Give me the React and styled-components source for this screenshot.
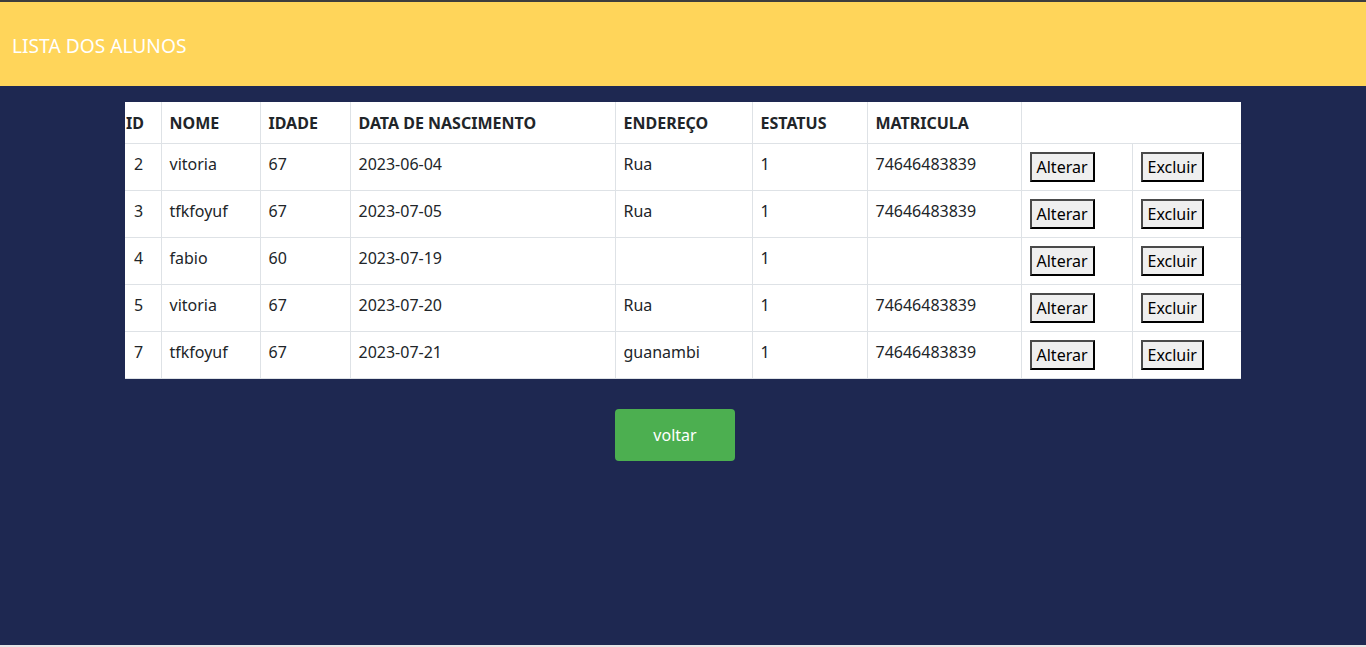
import React from "react";
import styled, { createGlobalStyle } from "styled-components";

const Global = createGlobalStyle`
  html, body { margin: 0; padding: 0; }
  body {
    font-family: "Segoe UI", "Noto Sans", sans-serif;
    background: #e6e6e6;
  }
`;

const Page = styled.div`
  display: flex;
  flex-direction: column;
  height: 645px;
  border-top: 2px solid #3d3d3d;
  box-sizing: border-box;
  background: #1e2851;
`;

const Header = styled.header`
  height: 84px;
  background: #ffd55a;
  display: flex;
  align-items: center;
  padding-left: 12px;
  flex-shrink: 0;
`;

const Title = styled.h1`
  margin: 0;
  color: #ffffff;
  font-size: 19.2px;
  font-weight: 400;
  padding-top: 2px;
`;

const Main = styled.main`
  flex: 1;
  display: flex;
  flex-direction: column;
  align-items: center;
  padding-top: 16px;
`;

const Table = styled.table`
  width: 1116px;
  border-collapse: collapse;
  background: #ffffff;
  color: #212529;
  font-size: 16px;
  table-layout: fixed;
`;

const Th = styled.th`
  text-align: left;
  font-weight: 700;
  padding: ${(p) => (p.$tight ? "9px 0 8px 1px" : "9px 8px 8px 8px")};
  line-height: 24px;
  border: 1px solid #dee2e6;
  border-top: none;
  vertical-align: top;
  white-space: nowrap;
  &:first-child { border-left: none; }
  &:last-child { border-right: none; }
`;

const Td = styled.td`
  padding: 8px;
  line-height: 24px;
  border: 1px solid #dee2e6;
  vertical-align: top;
  white-space: nowrap;
  &:first-child { border-left: none; padding-left: 9px; }
  &:last-child { border-right: none; }
`;

const Row = styled.tr`
  &:last-child td { border-bottom: 1px solid #dee2e6; }
`;

const ActionButton = styled.button`
  display: block;
  font-family: inherit;
  font-size: 16px;
  line-height: 22px;
  height: 30px;
  padding: 0 5px;
  background: #efefef;
  color: #000;
  border: 2px solid;
  border-color: #4a4a4a #000 #000 #4a4a4a;
  cursor: pointer;
`;

const ButtonRow = styled.div`
  display: flex;
  justify-content: center;
  margin-top: 30px;
  width: 100%;
`;

const BackButton = styled.button`
  width: 120px;
  height: 52px;
  margin-right: 16px;
  border: none;
  border-radius: 4px;
  background: #4caf50;
  color: #ffffff;
  font-family: inherit;
  font-size: 16px;
  cursor: pointer;
`;

const widths = [36, 99, 90, 265, 137, 115, 154, 111, 109];

const alunos = [
  { id: 2, nome: "vitoria", idade: 67, data: "2023-06-04", end: "Rua", status: 1, mat: "74646483839" },
  { id: 3, nome: "tfkfoyuf", idade: 67, data: "2023-07-05", end: "Rua", status: 1, mat: "74646483839" },
  { id: 4, nome: "fabio", idade: 60, data: "2023-07-19", end: "", status: 1, mat: "" },
  { id: 5, nome: "vitoria", idade: 67, data: "2023-07-20", end: "Rua", status: 1, mat: "74646483839" },
  { id: 7, nome: "tfkfoyuf", idade: 67, data: "2023-07-21", end: "guanambi", status: 1, mat: "74646483839" },
];

export default function App() {
  return (
    <>
      <Global />
      <Page>
        <Header>
          <Title>LISTA DOS ALUNOS</Title>
        </Header>
        <Main>
          <Table>
            <colgroup>
              {widths.map((w, i) => (
                <col key={i} style={{ width: w }} />
              ))}
            </colgroup>
            <thead>
              <tr>
                <Th $tight>ID</Th>
                <Th>NOME</Th>
                <Th>IDADE</Th>
                <Th>DATA DE NASCIMENTO</Th>
                <Th>ENDEREÇO</Th>
                <Th>ESTATUS</Th>
                <Th>MATRICULA</Th>
                <Th colSpan={2}></Th>
              </tr>
            </thead>
            <tbody>
              {alunos.map((a) => (
                <Row key={a.id}>
                  <Td>{a.id}</Td>
                  <Td>{a.nome}</Td>
                  <Td>{a.idade}</Td>
                  <Td>{a.data}</Td>
                  <Td>{a.end}</Td>
                  <Td>{a.status}</Td>
                  <Td>{a.mat}</Td>
                  <Td>
                    <ActionButton>Alterar</ActionButton>
                  </Td>
                  <Td>
                    <ActionButton>Excluir</ActionButton>
                  </Td>
                </Row>
              ))}
            </tbody>
          </Table>
          <ButtonRow>
            <BackButton>voltar</BackButton>
          </ButtonRow>
        </Main>
      </Page>
    </>
  );
}
